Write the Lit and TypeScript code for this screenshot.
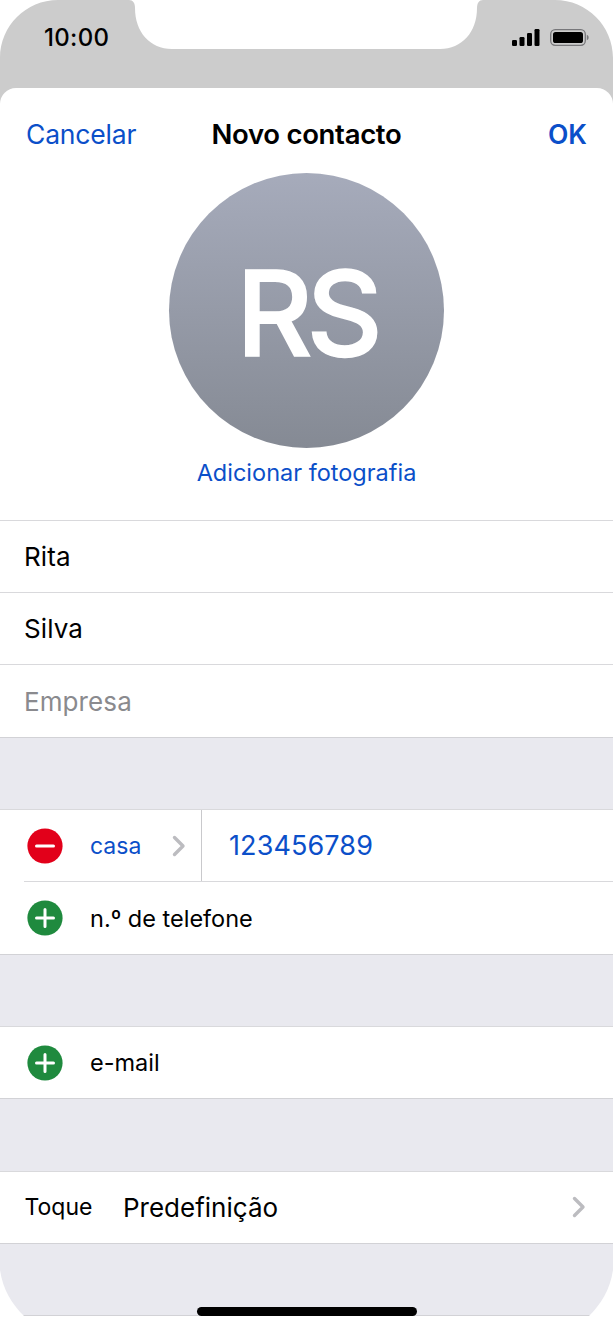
import { html, css, LitElement, svg } from 'lit';
import { customElement } from 'lit/decorators.js';

const chevron = () => html`
  <svg width="14" height="22" viewBox="0 0 14 22" fill="none">
    <path d="M2.5 2.5L11 11L2.5 19.5" stroke="#bcbcc0" stroke-width="3.4" stroke-linecap="round" stroke-linejoin="round"/>
  </svg>
`;

const roundIcon = (kind: 'add' | 'remove') => html`
  <svg class="round" width="36" height="36" viewBox="0 0 36 36">
    <circle cx="18" cy="18" r="17.6" fill=${kind === 'add' ? '#1f8a3e' : '#e2001a'}/>
    <path d=${kind === 'add' ? 'M18 9.5V26.5M9.5 18H26.5' : 'M9.5 18H26.5'} stroke="#fff" stroke-width="3" stroke-linecap="round"/>
  </svg>
`;

@customElement('app-root')
export class AppRoot extends LitElement {
  static override styles = css`
    :host {
      display: block;
      position: relative;
      width: 613px;
      height: 1328px;
      overflow: hidden;
      background: #fff;
      font-family: Inter, 'Liberation Sans', sans-serif;
      color: #000;
    }

    .mask {
      position: absolute;
      left: 0;
      top: 0;
      pointer-events: none;
    }

    .status {
      height: 104px;
      box-sizing: border-box;
      background: #cccccc;
      display: flex;
      justify-content: space-between;
      align-items: flex-start;
      padding: 24px 24px 0 44px;
    }

    .time {
      position: relative;
      z-index: 1;
      font-size: 24px;
      line-height: 28px;
      font-weight: 500;
      letter-spacing: 0.3px;
    }

    .indicators {
      position: relative;
      z-index: 1;
      display: flex;
      gap: 10px;
      margin-top: 5px;
    }

    .sheet {
      position: relative;
      background: #fff;
      border-radius: 16px 16px 0 0;
      margin-top: -16px;
    }

    .nav {
      display: grid;
      grid-template-columns: 1fr auto 1fr;
      align-items: center;
      height: 79px;
      padding: 6px 26px 0;
      font-size: 26.5px;
    }

    .cancel {
      color: #0b4fc9;
      font-weight: 400;
      letter-spacing: -0.2px;
    }

    .title {
      font-weight: 600;
      font-size: 27.5px;
      letter-spacing: -0.3px;
    }

    .ok {
      color: #0b4fc9;
      font-weight: 600;
      text-align: right;
    }

    .profile {
      height: 346.8px;
      display: flex;
      flex-direction: column;
      align-items: center;
    }

    .avatar {
      width: 275px;
      height: 275px;
      flex: none;
      box-sizing: border-box;
      padding-top: 4px;
      border-radius: 50%;
      background: linear-gradient(#a6abbb, #858a94);
      display: flex;
      align-items: center;
      justify-content: center;
      color: #fff;
      font-size: 118px;
      font-weight: 500;
      letter-spacing: -6px;
      -webkit-text-stroke: 1.5px #fff;
    }

    .add-photo {
      margin-top: 11px;
      color: #0b4fc9;
      font-size: 23.5px;
      line-height: 27px;
    }

    .group {
      background: #fff;
      border-top: 1px solid #d9d9dc;
      border-bottom: 1px solid #d2d2d6;
    }

    .spacer {
      height: 71.33px;
      background: #e9e9ef;
    }

    .row {
      height: 71.33px;
      display: flex;
      align-items: center;
      font-size: 26px;
    }

    .row + .row {
      border-top: 1px solid #d9d9dc;
    }

    .field {
      padding-left: 24px;
      letter-spacing: 0.1px;
    }

    .placeholder {
      color: #8a8a8e;
    }

    .inset {
      padding-left: 26.5px;
      font-size: 23.5px;
    }

    .round {
      flex: none;
      margin-right: 27.5px;
    }

    .type {
      width: 111px;
      color: #0b4fc9;
      display: flex;
      align-items: center;
      justify-content: space-between;
      padding-right: 15px;
      box-sizing: border-box;
      height: 100%;
      font-size: 23px;
    }

    .number {
      height: 100%;
      display: flex;
      align-items: center;
      border-left: 1px solid #c9c9cc;
      padding-left: 27px;
      color: #0b4fc9;
      font-size: 27px;
      letter-spacing: 0.1px;
    }

    .row.divided {
      position: relative;
      border-top-color: transparent;
    }

    .divided::before {
      content: '';
      position: absolute;
      left: 24px;
      right: 0;
      top: -1px;
      height: 1px;
      background: #d9d9dc;
    }

    .ringtone {
      justify-content: space-between;
      padding: 0 27px 0 24.5px;
    }

    .ringtone-label {
      font-size: 23px;
      width: 98.5px;
    }

    .ringtone-value {
      flex: 1;
    }

    .tail {
      height: 71.33px;
      background: #e9e9ef;
      border-bottom: 1px solid #d2d2d6;
    }

    .home {
      position: absolute;
      left: 197px;
      top: 1307px;
      width: 220px;
      height: 9px;
      border-radius: 5px;
      background: #000;
    }
  `;

  private renderMask() {
    // notch and rounded screen corners sit above the page
    return svg`
      <svg class="mask" width="613" height="1328" viewBox="0 0 613 1328" fill="#fff">
        <path d="M129 0C133 0 135 3 135 8C135 32 150 49 172 49H440C462 49 477 32 477 8C477 3 479 0 483 0Z"/>
        <path d="M0 0H58C26 0 0 26 0 58Z"/>
        <path d="M613 0H555C587 0 613 26 613 58Z"/>
        <path d="M0 1328V1270C3 1290 12 1304 24 1316V1328Z"/>
        <path d="M613 1328V1270C610 1290 601 1304 589 1316V1328Z"/>
      </svg>
    `;
  }

  override render() {
    return html`
      <div class="status">
        <span class="time">10:00</span>
        <div class="indicators">
          <svg width="28" height="17" viewBox="0 0 28 17" fill="#000">
            <rect x="0" y="11" width="5" height="6" rx="1.2"/>
            <rect x="7.5" y="8" width="5" height="9" rx="1.2"/>
            <rect x="15" y="4" width="5" height="13" rx="1.2"/>
            <rect x="22.5" y="0" width="5" height="17" rx="1.2"/>
          </svg>
          <svg width="39" height="17" viewBox="0 0 39 17">
            <rect x="0.7" y="0.7" width="34.6" height="15.6" rx="4.5" fill="none" stroke="#77777a" stroke-width="1.3"/>
            <rect x="3" y="3" width="30" height="11" rx="2.6" fill="#000"/>
            <path d="M36.8 5.8C38 6.2 38.6 7.2 38.6 8.5C38.6 9.8 38 10.8 36.8 11.2Z" fill="#77777a"/>
          </svg>
        </div>
      </div>

      <div class="sheet">
        <div class="nav">
          <span class="cancel">Cancelar</span>
          <span class="title">Novo contacto</span>
          <span class="ok">OK</span>
        </div>
        <div class="profile">
          <div class="avatar">RS</div>
          <div class="add-photo">Adicionar fotografia</div>
        </div>

        <div class="group">
          <div class="row field">Rita</div>
          <div class="row field">Silva</div>
          <div class="row field placeholder">Empresa</div>
        </div>
        <div class="spacer"></div>

        <div class="group">
          <div class="row inset">
            ${roundIcon('remove')}
            <div class="type">casa ${chevron()}</div>
            <div class="number">123456789</div>
          </div>
          <div class="row inset divided">
            ${roundIcon('add')}
            <span>n.º de telefone</span>
          </div>
        </div>
        <div class="spacer"></div>

        <div class="group">
          <div class="row inset">
            ${roundIcon('add')}
            <span>e-mail</span>
          </div>
        </div>
        <div class="spacer"></div>

        <div class="group">
          <div class="row ringtone">
            <span class="ringtone-label">Toque</span>
            <span class="ringtone-value">Predefinição</span>
            ${chevron()}
          </div>
        </div>
        <div class="tail"></div>
      </div>

      ${this.renderMask()}
      <div class="home"></div>
    `;
  }
}
